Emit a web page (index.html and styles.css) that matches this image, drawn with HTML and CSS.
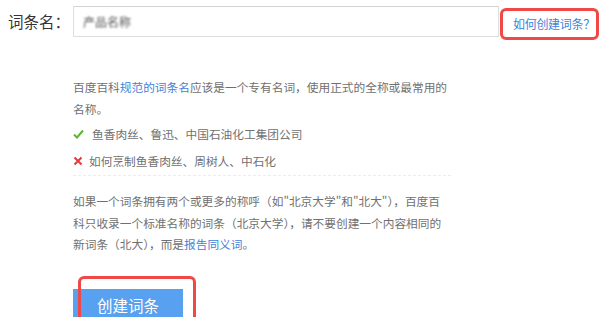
FILE: index.html
```html
<!DOCTYPE html>
<html lang="zh-CN">
<head>
  <meta charset="UTF-8" />
  <meta name="viewport" content="width=device-width, initial-scale=1" />
  <title>创建词条</title>
  <link rel="stylesheet" href="styles.css">
</head>
<body>
  <div class="row">
    <label class="label">词条名：</label>
    <div class="input"><span class="blur">产品名称</span></div>
    <a class="how" href="#">如何创建词条？</a>
  </div>

  <div class="tips">
    <p>百度百科<a href="#">规范的词条名</a>应该是一个专有名词，使用正式的全称或最常用的名称。</p>
    <ul>
      <li>
        <svg class="ico" width="11" height="10" viewBox="0 0 11 10"><path d="M1 5.5 L4 8.5 L10 1.5" fill="none" stroke="#5fb336" stroke-width="2"/></svg>
        <span class="ok">鱼香肉丝、鲁迅、中国石油化工集团公司</span>
      </li>
      <li>
        <svg class="ico" width="10" height="10" viewBox="0 0 10 10"><path d="M1.5 1.5 L8.5 8.5 M8.5 1.5 L1.5 8.5" fill="none" stroke="#e33b3b" stroke-width="2"/></svg>
        <span>如何烹制鱼香肉丝、周树人、中石化</span>
      </li>
    </ul>
    <p class="more">如果一个词条拥有两个或更多的称呼（如"北京大学"和"北大"），百度百科只收录一个标准名称的词条（北京大学），请不要创建一个内容相同的新词条（北大），而是<a href="#">报告同义词</a>。</p>
  </div>

  <div class="submit">
    <button>创建词条</button>
  </div>
</body>
</html>
```

FILE: styles.css
```css
* { box-sizing: border-box; }
body {
  margin: 0;
  padding: 6px 0 0 8px;
  font-family: "Noto Sans CJK SC", "Noto Sans", sans-serif;
  color: #707070;
  background: #fff;
  overflow: hidden;
}
a { color: #3f82d8; text-decoration: none; }

.row {
  display: flex;
  align-items: flex-start;
}
.label {
  width: 65px;
  font-size: 15.5px;
  line-height: 31px;
  color: #333;
}
.input {
  width: 426px;
  height: 31px;
  border: 1px solid #dedede;
  border-top-color: #d4d4d4;
  padding-left: 9px;
  font-size: 12px;
  line-height: 29px;
  color: #555;
}
.blur { filter: blur(1px); }
.how {
  width: 99px;
  margin: 2px 0 0 1px;
  height: 32px;
  padding: 0 0 0 10px;
  border: 3px solid #f04747;
  border-radius: 6px;
  font-size: 12px;
  line-height: 26px;
  letter-spacing: -0.3px;
  white-space: nowrap;
}

.tips {
  width: 378px;
  margin: 36px 0 0 65px;
  font-size: 11.7px;
}
.tips p {
  margin: 0;
  line-height: 21.5px;
}
.tips ul {
  list-style: none;
  margin: 1px 0 0;
  padding: 0 0 1px;
  border-bottom: 1px dashed #ececec;
}
.tips li {
  display: flex;
  align-items: center;
  gap: 6px;
  height: 27px;
}
.tips li .ok { margin-left: 2px; }
.ico { flex: none; }
.tips .more { margin: 14px 6px 0 0; }

.submit {
  position: relative;
  width: 118px;
  margin: 34px 0 0 65px;
}
.submit button {
  width: 110px;
  height: 34px;
  border: none;
  background: #58a1f0;
  color: #fff;
  font-family: inherit;
  font-size: 15.5px;
  line-height: 32px;
  padding: 0 0 2px;
  text-align: center;
}
.submit::after {
  content: "";
  position: absolute;
  left: 5px;
  top: -13px;
  width: 112px;
  height: 48px;
  border: 3px solid #f04747;
  border-radius: 6px;
}
```
